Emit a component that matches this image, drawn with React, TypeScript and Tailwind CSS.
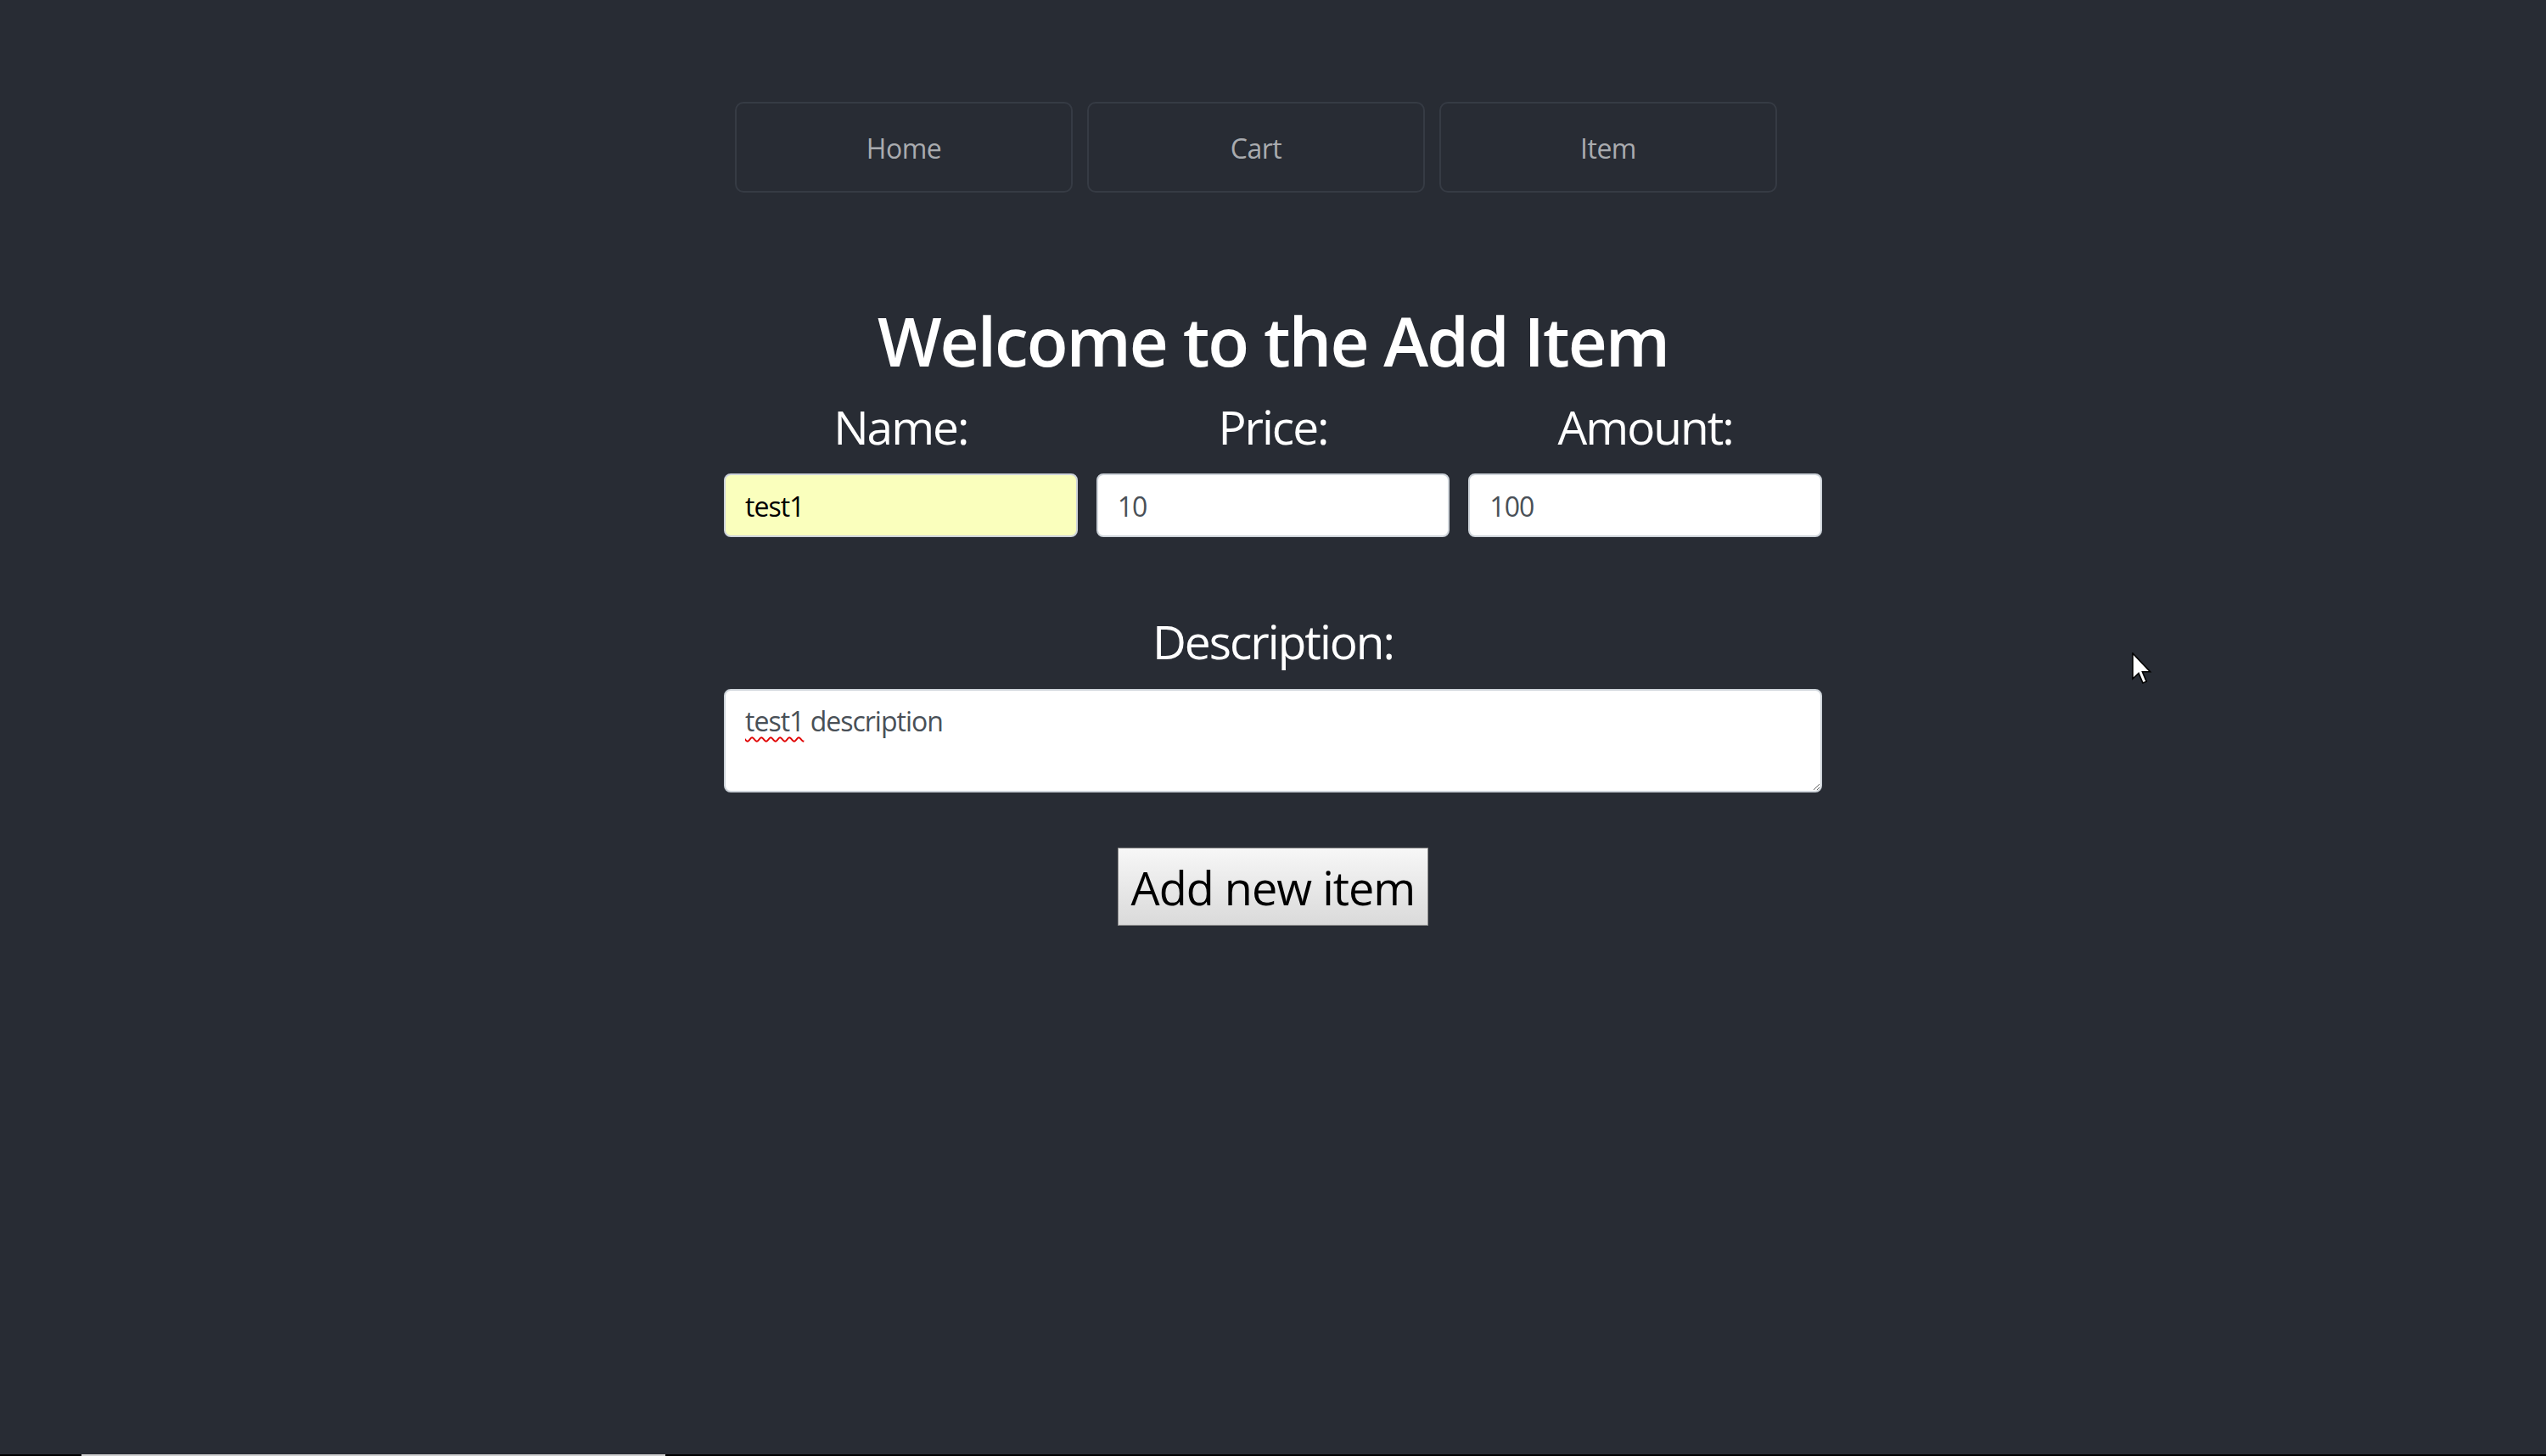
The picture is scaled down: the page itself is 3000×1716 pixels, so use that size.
import { useState } from "react";

const navItems = ["Home", "Cart", "Item"];

export default function App() {
  const [name, setName] = useState("test1");
  const [price, setPrice] = useState("10");
  const [amount, setAmount] = useState("100");
  const [description, setDescription] = useState("test1 description");

  return (
    <div
      className="relative flex h-[1716px] flex-col overflow-hidden bg-[#282c34] text-white"
      style={{ fontFamily: '"Open Sans", "Noto Sans", sans-serif' }}
    >
      {/* Nav */}
      <nav className="mt-[120px] flex justify-center gap-[17px] pr-[40px]">
        {navItems.map((item) => (
          <a
            key={item}
            href="#"
            className="flex h-[107px] w-[398px] items-center justify-center rounded-[10px] border-2 border-[#363b44] pt-[2px] text-[32px] tracking-[-0.5px] text-[#a9abaf]"
          >
            {item}
          </a>
        ))}
      </nav>

      {/* Add item form */}
      <div className="mx-auto flex w-[1294px] flex-col items-center">
        <h1 className="mt-[134px] text-[80px] font-semibold leading-[80px] tracking-[-2px]">
          Welcome to the Add Item
        </h1>

        <div className="mt-[34px] grid w-full grid-cols-3 gap-[22px]">
          {[
            { label: "Name:", value: name, set: setName, bg: "bg-[#faffbd] text-black" },
            { label: "Price:", value: price, set: setPrice, bg: "bg-white text-[#495057]" },
            { label: "Amount:", value: amount, set: setAmount, bg: "bg-white text-[#495057]" },
          ].map((f) => (
            <label key={f.label} className="flex flex-col items-center">
              <span className="text-[55px] leading-[55px] tracking-[-2px]">{f.label}</span>
              <input
                type="text"
                value={f.value}
                onChange={(e) => f.set(e.target.value)}
                className={`mt-[28px] h-[75px] w-full rounded-[8px] border-2 border-[#ced4da] px-[23px] pt-[2px] text-[32px] tracking-[-1px] outline-none ${f.bg}`}
              />
            </label>
          ))}
        </div>

        <label className="mt-[95px] flex w-full flex-col items-center">
          <span className="text-[55px] leading-[55px] tracking-[-2px]">Description:</span>
          <div className="relative mt-[29px] w-full">
            <textarea
              value={description}
              onChange={(e) => setDescription(e.target.value)}
              spellCheck={false}
              className="block h-[122px] w-full rounded-[8px] border-2 border-[#ced4da] bg-white px-[23px] pt-[12px] text-[32px] leading-[48px] tracking-[-1px] text-[#495057] outline-none"
            />
            {/* spellcheck squiggle */}
            <span className="pointer-events-none absolute left-[25px] top-[14px] text-[32px] leading-[48px] tracking-[-1px] text-transparent underline decoration-[#e00000] decoration-wavy decoration-2 underline-offset-[6px]">
              test1
            </span>
          </div>
        </label>

        <button
          type="button"
          className="mt-[65px] flex h-[92px] w-[366px] items-center justify-center border border-[#8f8f8f] bg-gradient-to-b from-[#f7f7f7] to-[#dadada] pt-[3px] text-[54px] tracking-[-1px] text-black"
        >
          Add new item
        </button>
      </div>

      {/* mouse pointer */}
      <svg
        className="pointer-events-none absolute left-[2512px] top-[769px]"
        width="24"
        height="38"
        viewBox="0 0 12 19"
      >
        <path
          d="M0.5 0.5 L0.5 15.5 L4 12.2 L6.5 18 L8.6 17.1 L6.2 11.4 L10.8 11.4 Z"
          fill="#fff"
          stroke="#000"
          strokeWidth="0.8"
          strokeLinejoin="miter"
        />
      </svg>

      {/* bottom strip */}
      <div className="mt-auto flex h-[2px] bg-black">
        <div className="ml-[96px] w-[688px] bg-[#cfcfcf]" />
      </div>
    </div>
  );
}
